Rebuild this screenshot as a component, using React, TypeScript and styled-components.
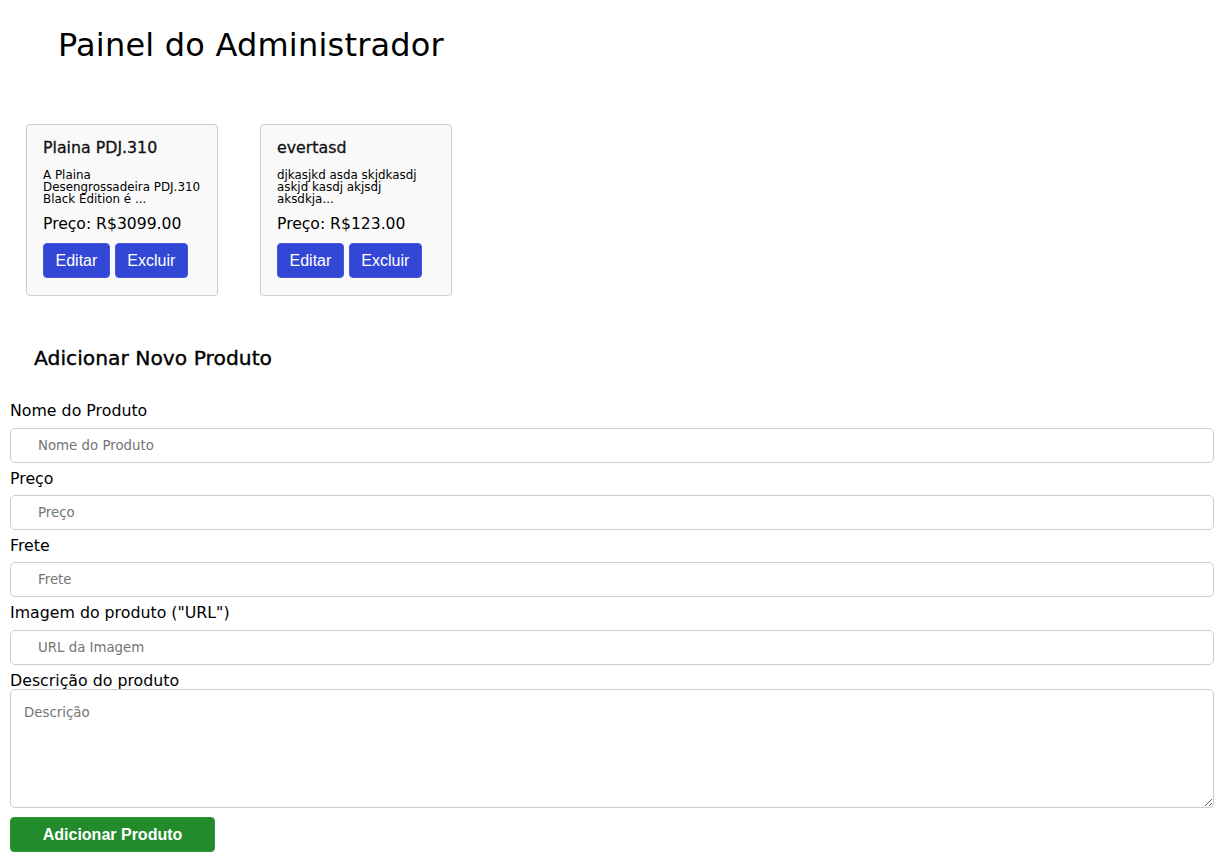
import React from "react";
import styled, { createGlobalStyle } from "styled-components";

const GlobalStyle = createGlobalStyle`
  html, body { margin: 0; padding: 0; background: #ffffff; }
  body {
    font-family: "DejaVu Sans", "Noto Sans", sans-serif;
    color: #000000;
  }
  * { box-sizing: border-box; }
`;

const Page = styled.div`
  display: flex;
  flex-direction: column;
  align-items: flex-start;
  width: 1229px;
  padding-bottom: 8px;
`;

const Title = styled.h1`
  margin: 21px 0 0 58px;
  font-size: 32px;
  line-height: 48px;
  font-weight: 400;
  letter-spacing: 0.2px;
`;

const CardRow = styled.div`
  display: flex;
  gap: 42px;
  margin: 55px 0 0 26px;
`;

const Card = styled.div`
  width: 192px;
  height: 172px;
  display: flex;
  flex-direction: column;
  align-items: flex-start;
  padding: 13px 16px 16px 16px;
  background: #f9f9f9;
  border: 1px solid #cccccc;
  border-radius: 4px;
`;

const CardTitle = styled.h3`
  margin: 0;
  font-size: 15.8px;
  line-height: 20px;
  font-weight: 400;
  -webkit-text-stroke: 0.3px currentColor;
  color: #111111;
`;

const CardDesc = styled.p`
  margin: 11px 0 0 0;
  font-size: 11.9px;
  line-height: 12px;
  width: 158px;
`;

const CardPrice = styled.p`
  margin: 8.5px 0 0 0;
  font-size: 15.6px;
  line-height: 20px;
`;

const ButtonRow = styled.div`
  display: flex;
  gap: 5px;
  margin-top: 9.5px;
`;

const ActionButton = styled.button`
  height: 35px;
  padding: 0 11.5px;
  border: 1px solid #4556dc;
  border-radius: 4px;
  background: #3347d6;
  color: #ffffff;
  font-family: "Liberation Sans", Arial, sans-serif;
  font-size: 16px;
  cursor: pointer;
`;

const SectionTitle = styled.h2`
  margin: 48.4px 0 0 34px;
  font-size: 20.3px;
  line-height: 28px;
  font-weight: 400;
  -webkit-text-stroke: 0.35px currentColor;
`;

const Form = styled.form`
  display: flex;
  flex-direction: column;
  align-items: flex-start;
  width: 1204px;
  margin: 27px 0 0 10px;
`;

const Label = styled.label<{ $tight?: boolean }>`
  display: block;
  font-size: 15.8px;
  line-height: 24px;
  margin-bottom: ${(p) => (p.$tight ? "-3.5px" : "4.5px")};
`;

const TextInput = styled.input`
  width: 100%;
  height: 35px;
  margin: 0 0 3.8px 0;
  padding: 0 27px;
  border: 1px solid #cccccc;
  border-radius: 5px;
  background: #ffffff;
  font-family: "DejaVu Sans", "Noto Sans", sans-serif;
  font-size: 13.33px;
  color: #000000;
  outline: none;
  &::placeholder { color: #757575; }
`;

const TextArea = styled.textarea`
  width: 100%;
  height: 119px;
  margin: 0;
  padding: 15px 13px;
  border: 1px solid #cccccc;
  border-radius: 5px;
  background: #ffffff;
  font-family: "DejaVu Sans", "Noto Sans", sans-serif;
  font-size: 13.33px;
  color: #000000;
  outline: none;
  &::placeholder { color: #757575; }
`;

const SubmitButton = styled.button`
  width: 205px;
  height: 35px;
  margin-top: 9px;
  border: 1px solid #2d9634;
  border-radius: 4px;
  background: #228b2c;
  color: #ffffff;
  font-family: "Liberation Sans", Arial, sans-serif;
  font-weight: 700;
  font-size: 16px;
  cursor: pointer;
`;

type Product = { name: string; desc: string; price: string };

const products: Product[] = [
  {
    name: "Plaina PDJ.310",
    desc: "A Plaina Desengrossadeira PDJ.310 Black Edition é ...",
    price: "3099.00",
  },
  {
    name: "evertasd",
    desc: "djkasjkd asda skjdkasdj askjd kasdj akjsdj aksdkja...",
    price: "123.00",
  },
];

const fields = [
  { label: "Nome do Produto", placeholder: "Nome do Produto" },
  { label: "Preço", placeholder: "Preço" },
  { label: "Frete", placeholder: "Frete" },
  { label: 'Imagem do produto ("URL")', placeholder: "URL da Imagem" },
];

export default function App() {
  return (
    <Page>
      <GlobalStyle />
      <Title>Painel do Administrador</Title>
      <CardRow>
        {products.map((p) => (
          <Card key={p.name}>
            <CardTitle>{p.name}</CardTitle>
            <CardDesc>{p.desc}</CardDesc>
            <CardPrice>Preço: R${p.price}</CardPrice>
            <ButtonRow>
              <ActionButton type="button">Editar</ActionButton>
              <ActionButton type="button">Excluir</ActionButton>
            </ButtonRow>
          </Card>
        ))}
      </CardRow>
      <SectionTitle>Adicionar Novo Produto</SectionTitle>
      <Form onSubmit={(e) => e.preventDefault()}>
        {fields.map((f) => (
          <React.Fragment key={f.label}>
            <Label>{f.label}</Label>
            <TextInput placeholder={f.placeholder} />
          </React.Fragment>
        ))}
        <Label $tight>Descrição do produto</Label>
        <TextArea placeholder="Descrição" />
        <SubmitButton type="submit">Adicionar Produto</SubmitButton>
      </Form>
    </Page>
  );
}
